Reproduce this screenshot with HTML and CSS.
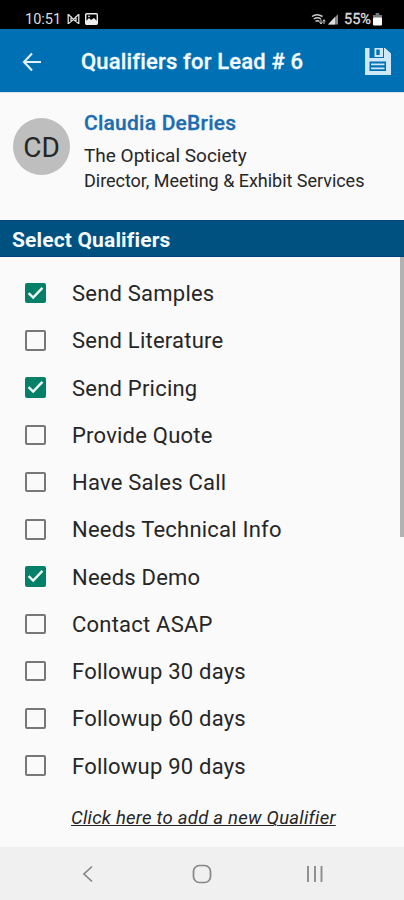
FILE: index.html
```
<!DOCTYPE html>
<html lang="en">
<head>
<meta charset="utf-8">
<title>Qualifiers</title>
<link rel="stylesheet" href="styles.css">
</head>
<body>
<div class="status">
  <span class="time">10:51</span>
  <svg class="mail" width="13" height="12" viewBox="0 0 13 12"><path d="M1.2 1v10M11.8 1v10M1.5 1.5l5 5 5-5M1.5 10.5l5-4 5 4M4 3v6M9 3v6" fill="none" stroke="#ddd" stroke-width="1.3"/></svg>
  <svg class="photo" width="13" height="12" viewBox="0 0 13 12"><rect x=".7" y=".7" width="11.6" height="10.6" rx="1" fill="none" stroke="#eee" stroke-width="1.4"/><path d="M1 8l3-3 2 2 3-2 3 3v3H1z" fill="#eee"/><circle cx="4" cy="3.3" r=".9" fill="#eee"/></svg>
  <svg class="wifi" width="15" height="12" viewBox="0 0 15 12"><path d="M1 3.5Q6 0 11.500 3.500M2.800 6Q6.500 3.500 10 6M4.500 8.300Q6.500 7 8.500 8.300" fill="none" stroke="#ccc" stroke-width="1.5"/><path d="M10 6.500v4M8.500 9l1.500 2 1.500-2M13 11V7M11.700 8.500L13 6.700l1.300 1.800" fill="none" stroke="#ccc"/></svg>
  <svg class="signal" width="11" height="12" viewBox="0 0 11 12"><path d="M0 11.500L10 1v10.500z" fill="#888"/><path d="M0 11.500L7 4v7.500z" fill="#ddd"/></svg>
  <span class="percent">55%</span>
  <svg class="battery" width="9" height="13" viewBox="0 0 9 13"><path d="M2.700 0h3.600v2H9v3H0V2h2.700z" fill="#777"/><rect y="4.500" width="9" height="8" rx="1" fill="#fff"/></svg>
</div>
<header class="bar">
  <svg class="back" width="20" height="20" viewBox="0 0 20 20"><path d="M10 1.500L2 10l8 8.500M2 10h17" fill="none" stroke="#e4f2fb" stroke-width="2.100"/></svg>
  <h1>Qualifiers for Lead # 6</h1>
  <svg class="save" width="26" height="27" viewBox="0 0 26 27"><path d="M0 0h4.500v10H19V0h1l6 5.500V27H0z" fill="#cfe8f8"/><path d="M9.500 0H18v9H9.500z" fill="#cfe8f8"/><path d="M11.300 1.500h3.400v5.500h-3.400z" fill="#0070b4"/><path d="M4.500 13.500h16.500v9.500H4.500z" fill="#0070b4"/><path d="M6 16.300h13.500M6 20.300h13.500" stroke="#cfe8f8" stroke-width="1.700"/></svg>
</header>
<section class="lead">
  <div class="avatar">CD</div>
  <div class="info">
    <div class="name">Claudia DeBries</div>
    <div class="org">The Optical Society</div>
    <div class="role">Director, Meeting &amp; Exhibit Services</div>
  </div>
</section>
<h2><span>Select Qualifiers</span></h2>
<main>
  <ul>
    <li><i class="box on"><svg viewBox="0 0 20 20"><path d="M3.500 9.800l4.500 4.500 9-9.500"/></svg></i><span>Send Samples</span></li>
    <li><i class="box"></i><span>Send Literature</span></li>
    <li><i class="box on"><svg viewBox="0 0 20 20"><path d="M3.500 9.800l4.500 4.500 9-9.500"/></svg></i><span>Send Pricing</span></li>
    <li><i class="box"></i><span>Provide Quote</span></li>
    <li><i class="box"></i><span>Have Sales Call</span></li>
    <li><i class="box"></i><span>Needs Technical Info</span></li>
    <li><i class="box on"><svg viewBox="0 0 20 20"><path d="M3.500 9.800l4.500 4.500 9-9.500"/></svg></i><span>Needs Demo</span></li>
    <li><i class="box"></i><span>Contact ASAP</span></li>
    <li><i class="box"></i><span>Followup 30 days</span></li>
    <li><i class="box"></i><span>Followup 60 days</span></li>
    <li><i class="box"></i><span>Followup 90 days</span></li>
  </ul>
  <a class="add">Click here to add a new Qualifier</a>
  <div class="thumb"></div>
</main>
<nav>
  <svg width="12" height="18" viewBox="0 0 12 18"><path d="M10 1.500L2 9l8 7.500" fill="none" stroke="#858585" stroke-width="1.700"/></svg>
  <svg width="20" height="20" viewBox="0 0 20 20"><rect x="1.500" y="1.500" width="17" height="17" rx="6" fill="none" stroke="#858585" stroke-width="1.700"/></svg>
  <svg width="18" height="18" viewBox="0 0 18 18"><path d="M2 1v16M9 1v16M15.500 1v16" fill="none" stroke="#8c8c8c" stroke-width="1.900"/></svg>
</nav>
</body>
</html>
```
FILE: styles.css
```
* { box-sizing: border-box; }
body {
  margin: 0;
  width: 404px;
  height: 900px;
  overflow: hidden;
  display: flex;
  flex-direction: column;
  background: #fafafa;
  color: #262626;
  font-family: Roboto, sans-serif;
}
svg { display: block; flex: none; }
.status {
  height: 29px;
  flex: none;
  display: flex;
  align-items: center;
  padding: 9px 22px 0 25px;
  background: #000;
  color: #ddd;
  font-size: 14.5px;
  white-space: nowrap;
}
.time { width: 42px; }
.photo { margin-left: 5px; }
.wifi { margin-left: auto; }
.signal { margin-left: 2px; }
.percent { margin-left: 5px; width: 29px; -webkit-text-stroke: 0.3px #ddd; }
.bar {
  height: 63px;
  flex: none;
  display: flex;
  align-items: center;
  padding: 2px 13px 0 22px;
  background: #0070b4;
  color: #f4faff;
}
h1 {
  margin: 0 0 0 39px;
  font-size: 22px;
  font-weight: 500;
  letter-spacing: 0.17px;
  -webkit-text-stroke: 0.3px #f4faff;
  white-space: nowrap;
}
.save { margin-left: auto; }
.lead {
  height: 128px;
  flex: none;
  display: flex;
  padding: 17px 0 0 13px;
  border-top: 1px solid #d8e4ec;
}
.avatar {
  width: 57px;
  height: 57px;
  margin-top: 8px;
  border-radius: 50%;
  background: #bebebe;
  font-size: 28px;
  line-height: 59px;
  text-align: center;
}
.info { margin-left: 14px; white-space: nowrap; }
.name {
  color: #1c6cb0;
  font-size: 21px;
  font-weight: 500;
  letter-spacing: 0.23px;
  line-height: 26px;
  -webkit-text-stroke: 0.3px #1c6cb0;
}
.org { margin-top: 7px; font-size: 19px; line-height: 25px; }
.role { font-size: 18px; letter-spacing: -0.03px; line-height: 25px; }
h2 {
  flex: none;
  height: 37px;
  margin: 0;
  padding-left: 12px;
  background: #005080;
  border: solid #00427a;
  border-width: 1px 0;
  color: #f5faff;
  font-size: 21px;
  font-weight: 700;
  letter-spacing: 0.15px;
  line-height: 38px;
}
main { position: relative; flex: 1; padding-top: 13px; }
ul { margin: 0; padding: 0; list-style: none; }
li {
  height: 47.25px;
  display: flex;
  align-items: center;
  padding-left: 25px;
  font-size: 22px;
  letter-spacing: 0.22px;
  white-space: nowrap;
}
li span { margin-left: 26.5px; }
.box {
  width: 20.5px;
  height: 20.5px;
  flex: none;
  border: 2px solid #777;
  border-radius: 2px;
  margin-top: -1px;
}
.box.on { border: 0; background: #058068; }
.box path { fill: none; stroke: #f0faf7; stroke-width: 2.3; }
.add {
  display: block;
  width: max-content;
  margin: 16.5px 0 0 71px;
  font-size: 18.5px;
  font-style: italic;
  letter-spacing: 0.25px;
  line-height: 24px;
  text-decoration: underline;
  text-decoration-thickness: 1px;
  white-space: nowrap;
}
.thumb {
  position: absolute;
  top: 0;
  right: 0;
  width: 4px;
  height: 280px;
  background: #b2b2b2;
}
nav {
  flex: none;
  height: 53px;
  display: flex;
  align-items: center;
  justify-content: space-between;
  padding: 0 80px 0 82px;
  background: #f0f0f0;
}
nav svg:nth-child(2) { margin-left: 3px; }
```
